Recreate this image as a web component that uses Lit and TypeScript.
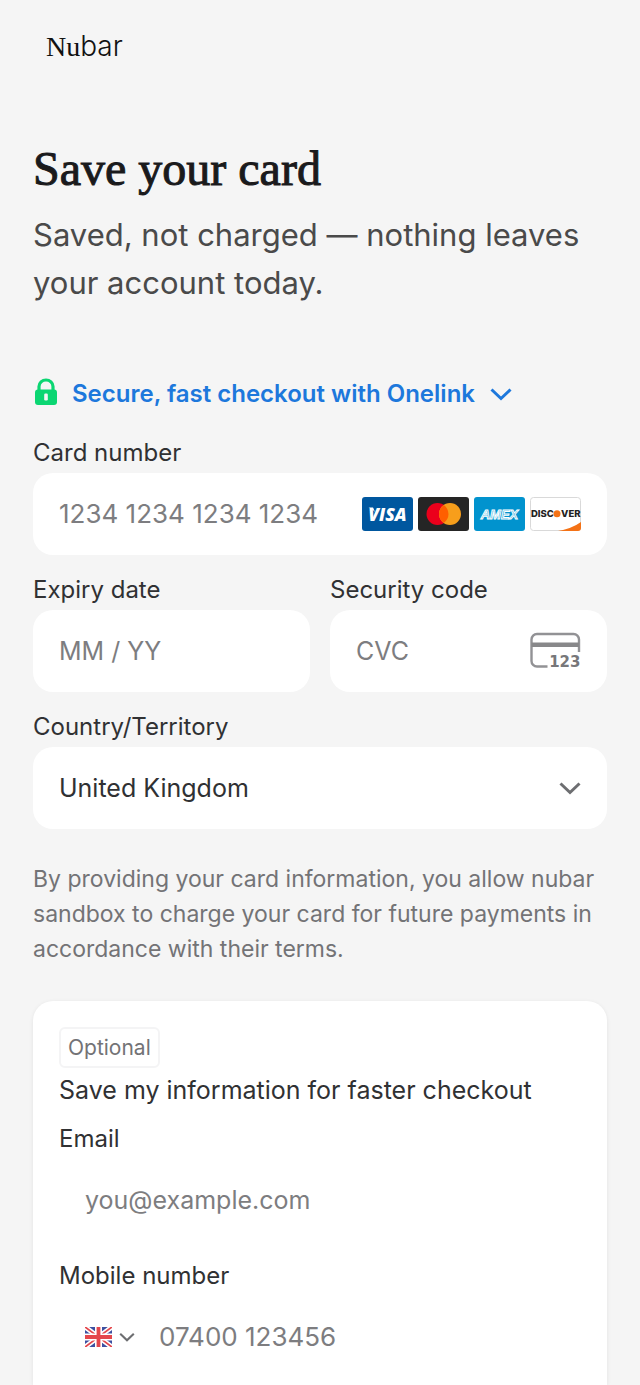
import { LitElement, html, css } from "lit";
import { customElement } from "lit/decorators.js";

const chevron = (cls: string) => html`
  <svg class="chevron ${cls}" viewBox="0 0 22 14" aria-hidden="true">
    <path d="M1.500 2.500 L11 11.500 L20.500 2.500" fill="none" stroke="currentColor" stroke-width="3" />
  </svg>
`;

const lock = html`
  <svg class="lock" viewBox="0 0 24 32" aria-hidden="true">
    <path d="M6 13 V8.500 a7 6.500 0 0 1 14 0 V13" fill="none" stroke="#0bd672" stroke-width="3.200" />
    <rect x="2" y="11.500" width="22" height="15.500" rx="3" fill="#0bd672" />
    <rect x="11.200" y="15.500" width="3.600" height="7" rx="1.200" fill="#f5f5f5" />
  </svg>
`;

const visa = html`
  <svg class="brand" viewBox="0 0 51 34" role="img" aria-label="Visa">
    <rect width="51" height="34" rx="3" fill="#00579f" />
    <text x="25.500" y="23.500" text-anchor="middle" font-family="Open Sans, sans-serif" font-size="17.500" font-weight="800" font-style="italic" fill="#fff">VISA</text>
    <path d="M6.500 10.500 H11 L13 15 Q10.500 11.800 6.500 10.500 Z" fill="#fff" />
  </svg>
`;

const mastercard = html`
  <svg class="brand" viewBox="0 0 51 34" role="img" aria-label="Mastercard">
    <rect width="51" height="34" rx="3" fill="#252525" />
    <circle cx="19.500" cy="17" r="11" fill="#eb001b" />
    <circle cx="32" cy="17" r="11" fill="#f79e1b" />
    <path d="M25.750 7.950 a11 11 0 0 1 0 18.100 a11 11 0 0 1 0 -18.100" fill="#ff5f00" />
  </svg>
`;

const amex = html`
  <svg class="brand" viewBox="0 0 51 34" role="img" aria-label="American Express">
    <rect width="51" height="34" rx="3" fill="#0193ce" />
    <text x="25.500" y="21.500" text-anchor="middle" font-family="Liberation Sans, sans-serif" font-size="13" font-weight="700" font-style="italic" fill="#4db4de" stroke="#fff" stroke-width="0.900">AMEX</text>
  </svg>
`;

const discover = html`
  <svg class="brand" viewBox="0 0 51 34" role="img" aria-label="Discover">
    <rect x="0.500" y="0.500" width="50" height="33" rx="3" fill="#fff" stroke="#d9d9d9" />
    <path d="M28 34 Q42 31.500 51 25 V31 a3 3 0 0 1 -3 3 Z" fill="#f47216" />
    <text x="1" y="20.200" font-family="Inter, sans-serif" font-size="9.500" font-weight="800" fill="#222">DISC</text>
    <circle cx="27" cy="16.800" r="3.500" fill="#f47216" />
    <text x="50.500" y="20.200" text-anchor="end" font-family="Inter, sans-serif" font-size="9.500" font-weight="800" fill="#222">VER</text>
  </svg>
`;

const cvcCard = html`
  <svg class="cvc" viewBox="0 0 51 38" aria-hidden="true">
    <path d="M17.500 34.500 H7 a5.500 5.500 0 0 1 -5.500 -5.500 V7.500 A5.500 5.500 0 0 1 7 2 H43.500 A5.500 5.500 0 0 1 49 7.500 V20" fill="none" stroke="#929295" stroke-width="2.400" />
    <rect x="1.500" y="10.500" width="47.500" height="4.500" fill="#88888a" />
    <text x="50.500" y="35" text-anchor="end" font-family="DejaVu Sans, sans-serif" font-size="15" font-weight="700" fill="#77777a">123</text>
  </svg>
`;

const flag = html`
  <svg class="flag" viewBox="0 0 27 20" aria-hidden="true">
    <rect width="27" height="20" fill="#3d50a0" />
    <path d="M0 0 L27 20 M27 0 L0 20" stroke="#fff" stroke-width="5" />
    <path d="M0 0 L27 20 M27 0 L0 20" stroke="#e4474c" stroke-width="1.800" />
    <path d="M13.500 0 V20 M0 10 H27" stroke="#fff" stroke-width="7" />
    <path d="M13.500 0 V20 M0 10 H27" stroke="#e4474c" stroke-width="3.800" />
  </svg>
`;

@customElement("app-root")
export class AppRoot extends LitElement {
  static styles = css`
    :host {
      display: block;
      background: #f5f5f5;
      color: #303133;
      font-family: Inter, "Liberation Sans", sans-serif;
    }
    *,
    *::before,
    *::after {
      box-sizing: border-box;
    }
    .page {
      display: flex;
      flex-direction: column;
      min-height: 100vh;
      padding: 28px 33px 0;
    }
    .brand-name {
      padding: 0 13px;
      font-size: 28px;
      line-height: 36px;
      color: #111;
    }
    .brand-serif {
      font-family: "Liberation Serif", serif;
    }
    .brand-sans {
      font-weight: 300;
    }
    .title {
      margin: 72px 0 0;
      font: 400 48px/64px "Liberation Serif", serif;
      color: #1a1a1c;
      -webkit-text-stroke: 1px #1a1a1c;
    }
    .lead {
      margin: 10px 0 0;
      font-size: 31px;
      line-height: 48px;
      color: #4a4a4a;
    }
    .secure {
      display: flex;
      align-items: center;
      gap: 15px;
      margin: 69px 0 0;
      padding: 0;
      border: 0;
      background: none;
      font: 600 24px/36px Inter, sans-serif;
      color: #1d78dc;
      text-align: left;
    }
    .lock {
      width: 24px;
      height: 32px;
      flex: none;
    }
    .form {
      display: flex;
      flex-direction: column;
      gap: 19px;
      margin-top: 25px;
    }
    .row {
      display: grid;
      grid-template-columns: 1fr 1fr;
      gap: 20px;
    }
    .field {
      display: flex;
      flex-direction: column;
      gap: 4px;
      min-width: 0;
    }
    .label {
      font-size: 24px;
      line-height: 32px;
    }
    .control {
      display: flex;
      align-items: center;
      height: 82px;
      padding: 0 26px;
      border-radius: 20px;
      background: #fff;
    }
    .input {
      flex: 1;
      width: 0;
      min-width: 0;
      padding: 0;
      border: 0;
      outline: 0;
      background: none;
      font: 400 25px/36px Inter, sans-serif;
      color: #303133;
    }
    .digits {
      font-size: 26px;
    }
    .input::placeholder {
      color: #7d7d80;
      opacity: 1;
    }
    .select {
      appearance: none;
    }
    .brands {
      display: flex;
      gap: 5px;
    }
    .brand {
      width: 51px;
      height: 34px;
    }
    .cvc {
      width: 51px;
      height: 38px;
    }
    .chevron {
      width: 22px;
      height: 14px;
      flex: none;
    }
    .chevron-grey {
      color: #6d6e71;
    }
    .chevron-small {
      width: 16px;
      height: 10px;
      color: #6d6e71;
    }
    .terms {
      margin: 33px 0 0;
      font-size: 23px;
      line-height: 35px;
      color: #737376;
    }
    .panel {
      display: flex;
      flex: 1;
      flex-direction: column;
      align-items: stretch;
      margin-top: 34px;
      padding: 26px 26px 0;
      border-radius: 20px 20px 0 0;
      background: #fff;
      box-shadow: 0 1px 4px rgba(0, 0, 0, 0.08);
    }
    .badge {
      align-self: flex-start;
      padding: 0 7px;
      border: 2px solid #f4f4f5;
      border-radius: 6px;
      font-size: 21px;
      line-height: 37px;
      color: #737376;
    }
    .panel-title {
      margin: 4px 0 15px;
      font-size: 25px;
      font-weight: 400;
      line-height: 36px;
    }
    .panel-fields {
      display: flex;
      flex-direction: column;
      gap: 19px;
    }
    .dial {
      display: flex;
      align-items: center;
      gap: 7px;
      margin-right: 24px;
      padding: 0;
      border: 0;
      background: none;
    }
    .flag {
      width: 27px;
      height: 20px;
    }
  `;

  render() {
    return html`
      <main class="page">
        <header class="brand-name"><span class="brand-serif">Nu</span><span class="brand-sans">bar</span></header>
        <h1 class="title">Save your card</h1>
        <p class="lead">Saved, not charged — nothing leaves your account today.</p>

        <button class="secure" type="button">
          ${lock}<span>Secure, fast checkout with Onelink</span>${chevron("")}
        </button>

        <form class="form">
          <div class="field">
            <label class="label" for="number">Card number</label>
            <div class="control">
              <input class="input digits" id="number" inputmode="numeric" placeholder="1234 1234 1234 1234" />
              <div class="brands">${visa}${mastercard}${amex}${discover}</div>
            </div>
          </div>
          <div class="row">
            <div class="field">
              <label class="label" for="expiry">Expiry date</label>
              <div class="control">
                <input class="input" id="expiry" inputmode="numeric" placeholder="MM / YY" />
              </div>
            </div>
            <div class="field">
              <label class="label" for="cvc">Security code</label>
              <div class="control">
                <input class="input" id="cvc" inputmode="numeric" placeholder="CVC" />
                ${cvcCard}
              </div>
            </div>
          </div>
          <div class="field">
            <label class="label" for="country">Country/Territory</label>
            <div class="control">
              <select class="input select" id="country">
                <option>United Kingdom</option>
              </select>
              ${chevron("chevron-grey")}
            </div>
          </div>
        </form>

        <p class="terms">
          By providing your card information, you allow nubar sandbox to charge your card for future payments in
          accordance with their terms.
        </p>

        <section class="panel">
          <span class="badge">Optional</span>
          <h2 class="panel-title">Save my information for faster checkout</h2>
          <div class="panel-fields">
            <div class="field">
              <label class="label" for="email">Email</label>
              <div class="control">
                <input class="input" id="email" type="email" placeholder="you@example.com" />
              </div>
            </div>
            <div class="field">
              <label class="label" for="mobile">Mobile number</label>
              <div class="control">
                <button class="dial" type="button" aria-label="Country code, United Kingdom">
                  ${flag}${chevron("chevron-small")}
                </button>
                <input class="input digits" id="mobile" type="tel" placeholder="07400 123456" />
              </div>
            </div>
          </div>
        </section>
      </main>
    `;
  }
}
